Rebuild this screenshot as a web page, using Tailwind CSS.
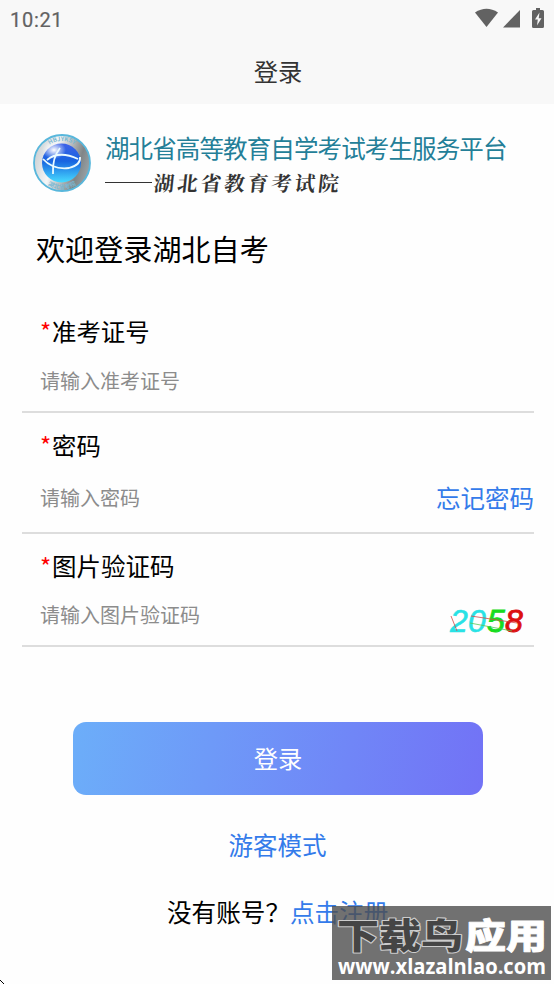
<!DOCTYPE html>
<html lang="zh-CN">
<head>
  <meta charset="UTF-8" />
  <meta name="viewport" content="width=device-width, initial-scale=1.0" />
  <title>登录</title>
  <script src="https://cdn.jsdelivr.net/npm/@tailwindcss/browser@4"></script>
</head>
<body class="bg-white">
<div class="relative h-[984px] w-[554px] overflow-hidden bg-[#fefefe] font-['Noto_Sans_CJK_SC',sans-serif] text-black">
  <!-- Header -->
  <header class="h-[104px] bg-[#f8f8f8]">
    <div class="flex h-10 items-center justify-between pl-[10px] pr-2 text-[#626262]">
      <span class="pb-px font-[Roboto,sans-serif] text-[20px] tracking-[0.7px] [-webkit-text-stroke:0.2px_#626262]">10:21</span>
      <svg class="h-10 w-[72px]" viewBox="0 0 72 40" fill="#626262">
        <path d="M1 12.500Q12.500 5 24 12.500L12.500 27Z" />
        <path d="M29 27.500L46 10V27.500Z" />
        <path d="M62 10V8h4v2h2.500q1.500 0 1.500 1.500v15q0 1.500-1.500 1.500h-9q-1.500 0-1.500-1.500v-15q0-1.500 1.500-1.500Z" />
        <path d="M65.500 12.500l-4.500 7h2.800l-.8 6 4.500-7.200h-2.800Z" fill="#f8f8f8" />
      </svg>
    </div>
    <h1 class="flex h-[62px] items-center justify-center pl-[2px] text-[24.300px] leading-none text-[#333]">登录</h1>
  </header>

  <!-- Logo -->
  <div class="flex h-[118px] items-center pl-8">
    <svg class="h-[60px] w-[60px] shrink-0" viewBox="0 0 60 60">
      <defs>
        <linearGradient id="ring" x1="0" x2="1" y1="0.300" y2="0.600">
          <stop offset="0" stop-color="#c9ced1" />
          <stop offset="0.350" stop-color="#f4f6f7" />
          <stop offset="0.800" stop-color="#808587" />
          <stop offset="1" stop-color="#9aa4a8" />
        </linearGradient>
        <linearGradient id="globe" x1="0" x2="0" y1="0" y2="1">
          <stop offset="0" stop-color="#3f62e8" />
          <stop offset="0.450" stop-color="#1764e0" />
          <stop offset="1" stop-color="#48dcff" />
        </linearGradient>
        <radialGradient id="shine">
          <stop offset="0" stop-color="#fff" />
          <stop offset="1" stop-color="#fff" stop-opacity="0" />
        </radialGradient>
        <path id="top-arc" d="M8 30a22 22 0 0 1 44 0" />
        <path id="bottom-arc" d="M4 30a26 26 0 0 0 52 0" />
      </defs>
      <circle cx="30" cy="30" r="28" fill="url(#ring)" stroke="#58b7dc" stroke-width="1.800" />
      <g fill="#7ab8d2" font-size="6" font-weight="700" text-anchor="middle">
        <text><textPath href="#top-arc" startOffset="50%">HBJYKSY</textPath></text>
        <text><textPath href="#bottom-arc" startOffset="50%">湖北省考院</textPath></text>
      </g>
      <circle cx="29.500" cy="30" r="19.500" fill="url(#globe)" />
      <ellipse cx="22" cy="17" rx="12" ry="9" fill="url(#shine)" />
      <path d="M11 26Q21 37 37 35Q49 32 48 24M15 27Q27 17 46 26M28 15Q20 25 21 41" fill="none" stroke="#e9faff" stroke-width="1.800" />
    </svg>
    <div class="ml-[13px] pt-1">
      <p class="whitespace-nowrap text-[24.500px] leading-8 tracking-[-0.880px] text-[#247f98]">湖北省高等教育自学考试考生服务平台</p>
      <div class="mt-[2px] flex items-center text-[#333]">
        <span class="h-px w-[47px] bg-[#333]"></span>
        <span class="ml-[2px] -skew-x-6 font-['AR_PL_UKai_CN','KaiTi','Noto_Serif_CJK_SC','Noto_Sans_CJK_SC',serif] text-[20.500px] font-bold leading-8 tracking-[3px]">湖北省教育考试院</span>
      </div>
    </div>
  </div>

  <h2 class="flex h-[54px] items-center pl-[36px] text-[29.100px] leading-none">欢迎登录湖北自考</h2>

  <!-- Form -->
  <form class="ml-[22px] mt-[29px] w-[512px]">
    <div class="h-[108px] border-b-2 border-[#ddd] pl-[18px]">
      <label class="flex h-[52px] items-center text-[24.400px] leading-none"><span class="w-[12px] font-['Noto_Sans_CJK_SC',sans-serif] text-[24px] text-[#f00]">*</span>准考证号</label>
      <p class="flex h-[47px] items-center text-[20px] leading-none text-[#8c8c8c]">请输入准考证号</p>
    </div>
    <div class="h-[121px] border-b-2 border-[#ddd] pl-[18px] pt-[6px]">
      <label class="flex h-[52px] items-center text-[24.400px] leading-none"><span class="w-[12px] font-['Noto_Sans_CJK_SC',sans-serif] text-[24px] text-[#f00]">*</span>密码</label>
      <div class="flex h-[54px] items-center justify-between leading-none">
        <span class="text-[20px] text-[#8c8c8c]">请输入密码</span>
        <a class="text-[24.500px] text-[#347bea]">忘记密码</a>
      </div>
    </div>
    <div class="h-[113px] border-b-2 border-[#ddd] pl-[18px] pt-[6px]">
      <label class="flex h-[52px] items-center text-[24.500px] leading-none"><span class="w-[12px] font-['Noto_Sans_CJK_SC',sans-serif] text-[24px] text-[#f00]">*</span>图片验证码</label>
      <div class="flex h-[46px] items-center justify-between leading-none">
        <span class="text-[20px] text-[#8c8c8c]">请输入图片验证码</span>
        <!-- Captcha -->
        <svg class="mt-3 h-[36px] w-[88px]" viewBox="0 0 88 36" font-family="Liberation Sans, sans-serif" font-size="32" font-style="italic">
          <text x="4" y="29" fill="#28e2e5" stroke="#28e2e5" stroke-width="0.600">2</text>
          <text x="22" y="29" fill="#28e2e5" stroke="#28e2e5" stroke-width="0.600">0</text>
          <text x="41" y="29" fill="#16dc20" stroke="#16dc20" stroke-width="0.900">5</text>
          <text x="59" y="29" fill="#dc1010" stroke="#dc1010" stroke-width="0.900">8</text>
          <path d="M5 13l6 15M25 13l46 7" fill="none" stroke="#d34848" stroke-width="0.800" />
          <path d="M24 20l42 8" fill="none" stroke="#55c955" stroke-width="0.800" />
        </svg>
      </div>
    </div>
  </form>

  <!-- Actions -->
  <button class="ml-[73px] mt-[75px] flex h-[73px] w-[410px] items-center justify-center rounded-[13px] bg-linear-[100deg] from-[#6caef9] to-[#7272f6] text-[24.300px] leading-none text-white">登录</button>
  <a class="flex h-[100px] items-center justify-center pl-px text-[24.500px] leading-none text-[#347bea]">游客模式</a>
  <p class="-mt-[4px] flex h-10 items-center pl-[167px] text-[24.600px] leading-none">没有账号？<a class="text-[#347bea]">点击注册</a></p>

  <!-- Watermark -->
  <div class="absolute left-[332px] top-[906px] h-[74px] w-[219px] bg-[#4d4d4d]/80">
    <svg class="h-[74px] w-[219px]" viewBox="0 0 219 74" font-weight="900" stroke-linejoin="round">
      <g font-family="Noto Sans CJK SC, sans-serif" font-size="35" paint-order="stroke">
        <text x="5" y="43" textLength="126" lengthAdjust="spacingAndGlyphs" fill="#454545" stroke="#ccc" stroke-width="2.200">下载鸟</text>
        <text x="133" y="43" textLength="82" lengthAdjust="spacingAndGlyphs" fill="#fff" stroke="#fff" stroke-width="0.800">应用</text>
      </g>
      <text x="6" y="68" textLength="208" lengthAdjust="spacingAndGlyphs" font-family="Open Sans, sans-serif" font-size="21" font-weight="700" fill="#fff">www.xlazalnlao.com</text>
    </svg>
  </div>
  <svg class="absolute bottom-0 left-0 h-[5px] w-[5px]" viewBox="0 0 5 5"><path d="M0 1l4 4" stroke="#000" stroke-width="1" /></svg>
</div>
</body>
</html>
